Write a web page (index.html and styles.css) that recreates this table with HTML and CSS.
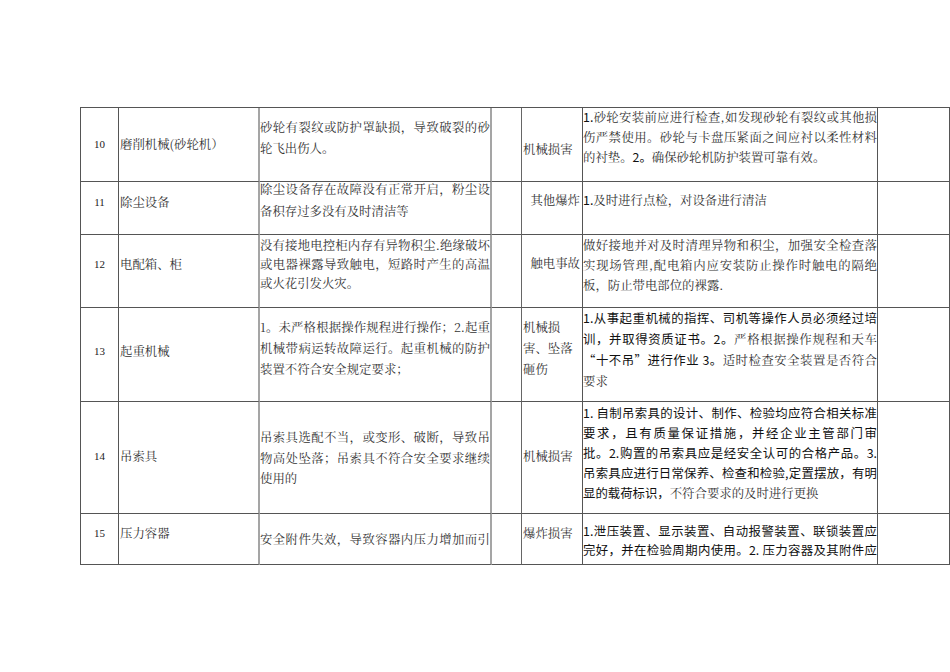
FILE: index.html
```html
<!DOCTYPE html>
<html lang="zh-CN">
<head>
<meta charset="utf-8">
<title>危险源辨识表</title>
<link rel="stylesheet" href="styles.css">
</head>
<body>
<div class="sheet">
  <div class="row r10">
    <div class="no">10</div>
    <div class="name">磨削机械(砂轮机）</div>
    <div class="risk">
      <span class="ln full">砂轮有裂纹或防护罩缺损，导致破裂的砂</span>
      <span class="ln">轮飞出伤人。</span>
    </div>
    <div class="gap"></div>
    <div class="harm">机械损害</div>
    <div class="fix">
      <span class="ln full"><span class="sans">1.</span>砂轮安装前应进行检查,如发现砂轮有裂纹或其他损</span>
      <span class="ln full">伤严禁使用。砂轮与卡盘压紧面之间应衬以柔性材料</span>
      <span class="ln">的衬垫。<span class="sans">2。</span>确保砂轮机防护装置可靠有效。</span>
    </div>
    <div class="end"></div>
  </div>
  <div class="row r11">
    <div class="no">11</div>
    <div class="name">除尘设备</div>
    <div class="risk">
      <span class="ln full">除尘设备存在故障没有正常开启，粉尘设</span>
      <span class="ln">备积存过多没有及时清洁等</span>
    </div>
    <div class="gap"></div>
    <div class="harm right">其他爆炸</div>
    <div class="fix">
      <span class="ln"><span class="sans">1.</span>及时进行点检，对设备进行清洁</span>
    </div>
    <div class="end"></div>
  </div>
  <div class="row r12">
    <div class="no">12</div>
    <div class="name">电配箱、柜</div>
    <div class="risk">
      <span class="ln full">没有接地电控柜内存有异物积尘.绝缘破坏</span>
      <span class="ln full">或电器裸露导致触电，短路时产生的高温</span>
      <span class="ln">或火花引发火灾。</span>
    </div>
    <div class="gap"></div>
    <div class="harm right">触电事故</div>
    <div class="fix">
      <span class="ln full">做好接地并对及时清理异物和积尘，加强安全检查落</span>
      <span class="ln full">实现场管理,配电箱内应安装防止操作时触电的隔绝</span>
      <span class="ln">板，防止带电部位的裸露.</span>
    </div>
    <div class="end"></div>
  </div>
  <div class="row r13">
    <div class="no">13</div>
    <div class="name">起重机械</div>
    <div class="risk">
      <span class="ln full">1。未严格根据操作规程进行操作；2.起重</span>
      <span class="ln full">机械带病运转故障运行。起重机械的防护</span>
      <span class="ln">装置不符合安全规定要求；</span>
    </div>
    <div class="gap"></div>
    <div class="harm">
      <span class="ln">机械损</span>
      <span class="ln">害、坠落</span>
      <span class="ln">砸伤</span>
    </div>
    <div class="fix">
      <span class="ln full"><span class="sans">1.从事起重机械的指挥、司机等操作人员必须经过培</span></span>
      <span class="ln full"><span class="sans">训，并取得资质证书。2。</span>严格根据操作规程和天车</span>
      <span class="ln full"><span class="sans">“十不吊”进行作业 3。</span>适时检查安全装置是否符合</span>
      <span class="ln">要求</span>
    </div>
    <div class="end"></div>
  </div>
  <div class="row r14">
    <div class="no">14</div>
    <div class="name">吊索具</div>
    <div class="risk">
      <span class="ln full">吊索具选配不当，或变形、破断，导致吊</span>
      <span class="ln full">物高处坠落；吊索具不符合安全要求继续</span>
      <span class="ln">使用的</span>
    </div>
    <div class="gap"></div>
    <div class="harm">机械损害</div>
    <div class="fix">
      <span class="ln full"><span class="sans">1. 自制吊索具的设计、制作、检验均应符合相关标准</span></span>
      <span class="ln full"><span class="sans">要求，且有质量保证措施，并经企业主管部门审</span></span>
      <span class="ln full"><span class="sans">批。2.购置的吊索具应是经安全认可的合格产品。3.</span></span>
      <span class="ln full"><span class="sans">吊索具应进行日常保养、检查和检验,定置摆放，有明</span></span>
      <span class="ln"><span class="sans">显的载荷标识，</span>不符合要求的及时进行更换</span>
    </div>
    <div class="end"></div>
  </div>
  <div class="row r15">
    <div class="no">15</div>
    <div class="name">压力容器</div>
    <div class="risk">
      <span class="ln full">安全附件失效，导致容器内压力增加而引</span>
    </div>
    <div class="gap"></div>
    <div class="harm">爆炸损害</div>
    <div class="fix">
      <span class="ln full"><span class="sans">1.泄压装置、显示装置、自动报警装置、联锁装置应</span></span>
      <span class="ln full"><span class="sans">完好，并在检验周期内使用。2. 压力容器及其附件应</span></span>
    </div>
    <div class="end"></div>
  </div>
</div>
</body>
</html>
```

FILE: styles.css
```css
body {
  margin: 0;
  background: #ffffff;
  font-family: "Noto Serif CJK SC", "Noto Sans CJK SC", "Liberation Serif", serif;
  font-size: 12.4px;
  color: #333333;
}

.sheet {
  margin: 107px 0 0 80px;
  width: 870px;
  box-sizing: border-box;
  border-top: 1px solid #555555;
  border-left: 1px solid #555555;
  display: flex;
  flex-direction: column;
}

.row {
  display: grid;
  grid-template-columns: 38px 141px 232px 30px 61px 295px 72px;
}

.row > div {
  box-sizing: border-box;
  border-right: 1px solid #555555;
  border-bottom: 1px solid #555555;
  line-height: 18px;
  white-space: nowrap;
}

.row > .name {
  border-right: 2px solid #a5a5a5;
  padding-left: 1px;
}

.row > .risk {
  border-right: 2px solid #a5a5a5;
}

.row > .gap {
  border-right-color: #666666;
}

.no {
  font-family: "Liberation Serif", "Times New Roman", serif;
  font-size: 11px;
  text-align: center;
  color: #222222;
}

.harm {
  padding-left: 1px;
}

.harm.right {
  text-align: right;
  padding-right: 2px;
}

.ln {
  display: block;
}

.full {
  text-align: justify;
  text-align-last: justify;
}

.sans {
  font-family: "Noto Sans CJK SC", "DejaVu Sans", sans-serif;
  color: #111111;
}

/* row heights */
.r10 { height: 74px; }
.r11 { height: 53px; }
.r12 { height: 73px; }
.r13 { height: 94px; }
.r14 { height: 112px; }
.r15 { height: 51px; }

/* row 10 */
.r10 .no, .r10 .name { padding-top: 27px; }
.r10 .risk { padding-top: 9px; line-height: 21px; }
.r10 .harm { padding-top: 32px; }
.r10 .fix { padding-top: 0; line-height: 19.8px; }

/* row 11 */
.r11 .no, .r11 .name { padding-top: 11px; }
.r11 .risk { padding-top: 0; line-height: 22px; }
.r11 .risk .ln:first-child { margin-top: -4px; }
.r11 .harm { padding-top: 9px; }
.r11 .fix { padding-top: 9px; }

/* row 12 */
.r12 .no, .r12 .name { padding-top: 20px; }
.r12 .risk { padding-top: 1px; line-height: 19.2px; }
.r12 .harm { padding-top: 19px; }
.r12 .fix { padding-top: 0; line-height: 20px; }

/* row 13 */
.r13 .no, .r13 .name { padding-top: 34px; }
.r13 .risk { padding-top: 9px; line-height: 21px; }
.r13 .harm { padding-top: 9px; line-height: 21px; }
.r13 .fix { padding-top: 0; line-height: 21px; }

/* row 14 */
.r14 .no, .r14 .name { padding-top: 45px; }
.r14 .risk { padding-top: 25px; line-height: 20.5px; }
.r14 .harm { padding-top: 45px; }
.r14 .fix { padding-top: 1px; line-height: 20px; }

/* row 15 */
.r15 .no, .r15 .name { padding-top: 10px; }
.r15 .risk { padding-top: 16px; }
.r15 .harm { padding-top: 10px; }
.r15 .fix { padding-top: 8px; line-height: 18.6px; }
```
